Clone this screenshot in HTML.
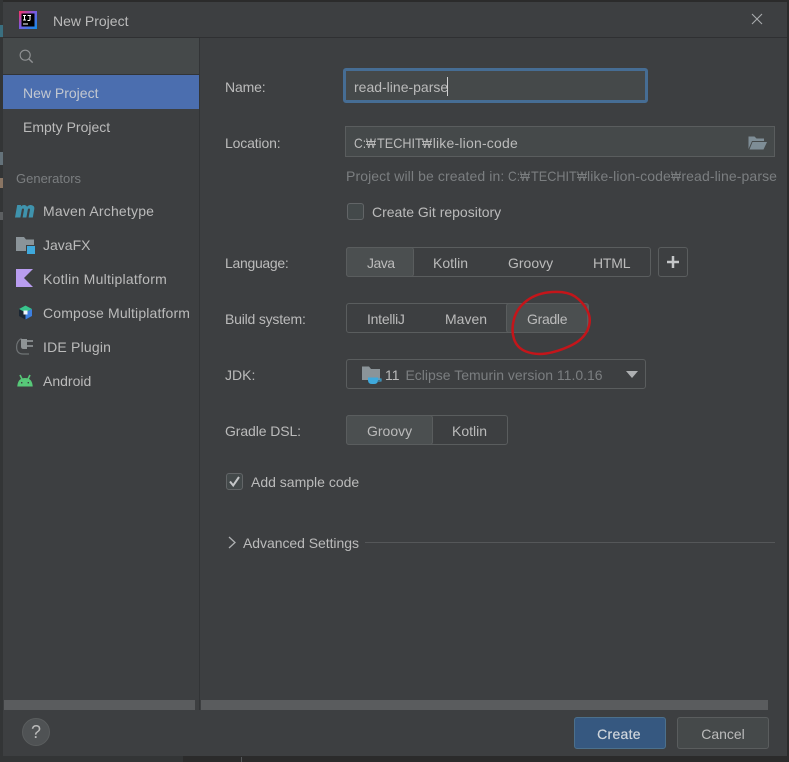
<!DOCTYPE html>
<html lang="en">
<head>
<meta charset="utf-8">
<title>New Project</title>
<style>
html,body{margin:0;padding:0;background:#2b2b2b;}
body{width:789px;height:762px;overflow:hidden;position:relative;font-family:"Liberation Sans","Noto Sans CJK KR",sans-serif;font-size:14px;color:#bbbbbb;}
.a{position:absolute;white-space:nowrap;}
.t{position:absolute;white-space:nowrap;line-height:18px;height:18px;}
.s{letter-spacing:.2px;}
.l{letter-spacing:-.15px;}
.box{position:absolute;box-sizing:border-box;}
.seg{position:absolute;box-sizing:border-box;border:1px solid #5a5d5e;border-radius:3px;height:30px;}
.sel{position:absolute;box-sizing:border-box;border:1px solid #5a5d5e;border-radius:3px;background:#4b4f50;height:30px;}
.dim{color:#7b7e80;}
.w{display:inline-block;width:10.5px;transform:scaleX(.75);transform-origin:0 50%;letter-spacing:0;}
.c{display:inline-block;width:12px;transform:scaleX(.86);transform-origin:0 50%;letter-spacing:0;}
.u{display:inline-block;width:45.7px;transform:scaleX(.905);transform-origin:0 50%;letter-spacing:0;}
svg{position:absolute;overflow:visible;}
</style>
</head>
<body>
<div class="box" style="left:0;top:0;width:3px;height:762px;background:#333536"></div>
<div class="box" style="left:0;top:25px;width:3px;height:12px;background:#3a6f80"></div>
<div class="box" style="left:0;top:152px;width:3px;height:13px;background:#64727a"></div>
<div class="box" style="left:0;top:178px;width:3px;height:10px;background:#8a7563"></div>
<div class="box" style="left:0;top:212px;width:3px;height:8px;background:#5c5f61"></div>
<div class="box" style="left:3px;top:2px;width:784px;height:754px;background:#3d3f41"></div>
<div class="box" style="left:3px;top:37px;width:784px;height:1px;background:#2f3032"></div>
<div class="box" style="left:199px;top:38px;width:1px;height:672px;background:#323436"></div>
<div class="box" style="left:3px;top:38px;width:196px;height:36px;background:#45494a"></div>
<div class="box" style="left:3px;top:74px;width:196px;height:1px;background:#323436"></div>
<div class="box" style="left:3px;top:75px;width:196px;height:34px;background:#4b6eaf"></div>

<svg style="left:18px;top:10px" width="20" height="20" viewBox="0 0 20 20">
<defs><linearGradient id="g" x1="0" y1="0" x2="1" y2="1"><stop offset="0" stop-color="#fe315d"/><stop offset=".45" stop-color="#7c59e0"/><stop offset="1" stop-color="#0b8fe8"/></linearGradient></defs>
<rect x="1" y="1" width="18" height="18" fill="url(#g)"/>
<rect x="3.5" y="3.5" width="13" height="13" fill="#000"/>
<path d="M5 5.5h3M6.5 5.5v4.5M5 10h3M9.5 5.5h3.5M12 5.5v4q0 1-1 1h-1.5" stroke="#fff" fill="none" stroke-width="1"/>
<rect x="5" y="13.5" width="5" height="1" fill="#fff"/>
</svg>
<div class="t" style="left:53px;top:12px">New Project</div>
<svg style="left:752px;top:14px" width="10" height="10" viewBox="0 0 10 10"><path d="M0 0L10 10M10 0L0 10" stroke="#a9abad" stroke-width="1.1"/></svg>

<svg style="left:19px;top:49px" width="15" height="15" viewBox="0 0 17 17"><circle cx="7" cy="7" r="5.7" fill="none" stroke="#8f9193" stroke-width="1.3"/><path d="M11 11L15.5 15.5" stroke="#8f9193" stroke-width="1.6"/></svg>

<div class="t" style="left:23px;top:84px;color:#c3c8d0">New Project</div>
<div class="t" style="left:23px;top:118px">Empty Project</div>
<div class="t dim" style="left:16px;top:170px;font-size:13px">Generators</div>

<svg style="left:15px;top:204px" width="20" height="14" viewBox="0 0 20 14"><path d="M0 13.5L2.2 1H6L5.8 2.5Q7.5 0.7 9.5 1Q11.5 1.3 12 2.8Q13.8 0.7 16 1Q19.8 1.5 19.3 5L17.8 13.5H13.6L15 5.6Q15 4.5 14 4.5Q13 4.5 12.8 5.6L11.4 13.5H7.6L9 5.6Q9 4.5 8 4.5Q7 4.5 6.8 5.6L5.4 13.5Z" fill="#3f93ad"/></svg>
<div class="t s" style="left:43px;top:202px">Maven Archetype</div>

<svg style="left:16px;top:236px" width="20" height="19" viewBox="0 0 20 19"><path d="M0 1H8L10 3.5H18V15H0Z" fill="#8b9499"/><rect x="11" y="10" width="8" height="8" fill="#3fa9dc"/><rect x="10" y="9" width="1" height="9" fill="#3d3f41"/><rect x="10" y="9" width="9" height="1" fill="#3d3f41"/></svg>
<div class="t" style="left:43px;top:236px">JavaFX</div>

<svg style="left:16px;top:269px" width="17" height="18" viewBox="0 0 17 18"><path d="M0 0H17L8 9L17 18H0Z" fill="#b99df0"/></svg>
<div class="t" style="left:43px;top:270px;letter-spacing:.25px">Kotlin Multiplatform</div>

<svg style="left:18px;top:305px" width="15" height="15" viewBox="0 0 15 15"><path d="M7.5 0.5L14 4V11L7.5 14.5L1 11V4Z" fill="#1c2733"/><path d="M7.5 0.5L14 4L7.5 7.5L1 4Z" fill="#39c48c"/><path d="M14 4V11L7.5 14.5V7.5Z" fill="#3c7fe0"/><rect x="5.5" y="5.5" width="4" height="4" fill="#f0f6fa"/></svg>
<div class="t s" style="left:43px;top:304px;letter-spacing:.15px">Compose Multiplatform</div>

<svg style="left:16px;top:337px" width="18" height="18" viewBox="0 0 18 18"><path d="M5.5 1.5Q0.6 4 0.6 10Q0.6 17 7 17H13" fill="none" stroke="#6f7375" stroke-width="1.2"/><path d="M5 2H11V12H7.5Q5 12 5 9.5Z" fill="#8f9496"/><path d="M11 4H17M11 9H17" stroke="#9a9ea0" stroke-width="1.6"/></svg>
<div class="t s" style="left:43px;top:338px">IDE Plugin</div>

<svg style="left:17px;top:375px" width="16" height="12" viewBox="0 0 16 12"><path d="M0.3 11.5Q0.8 3 8 3Q15.2 3 15.7 11.5Z" fill="#57c878"/><path d="M3 0L5 4M13 0L11 4" stroke="#57c878" stroke-width="1.6"/><rect x="4" y="7" width="1.4" height="1.4" fill="#3d3f41"/><rect x="10.6" y="7" width="1.4" height="1.4" fill="#3d3f41"/></svg>
<div class="t" style="left:43px;top:372px">Android</div>

<div class="t l" style="left:225px;top:78px">Name:</div>
<div class="box" style="left:343px;top:68px;width:305px;height:35px;background:#45494a;border:3px solid #466d94;border-radius:3px"></div>
<div class="t" style="left:354px;top:78px">read-line-parse</div>
<div class="box" style="left:447px;top:77px;width:1px;height:19px;background:#d0d0d0"></div>

<div class="t l" style="left:225px;top:134px">Location:</div>
<div class="box" style="left:345px;top:126px;width:430px;height:31px;background:#45494a;border:1px solid #5a5d5e"></div>
<div class="t" style="left:354px;top:134px"><span class="c">C:</span><span class="w">₩</span><span class="u">TECHIT</span><span class="w">₩</span><span style="letter-spacing:.2px">like-lion-code</span></div>
<svg style="left:748px;top:135px" width="19" height="15" viewBox="0 0 19 15"><path d="M0.5 14V1.5H6.5L8.5 3.5H16V6H4L0.5 14Z" fill="#7e8d96"/><path d="M4.5 7H19L15.5 14.5H1.5Z" fill="#7e8d96"/></svg>
<div class="t dim" style="left:346px;top:167px;letter-spacing:.1px">Project will be created in: <span class="c">C:</span><span class="w">₩</span><span class="u">TECHIT</span><span class="w">₩</span>like-lion-code<span class="w">₩</span>read-line-parse</div>

<div class="box" style="left:347px;top:203px;width:17px;height:17px;background:#43494a;border:1px solid #626567;border-radius:3px"></div>
<div class="t" style="left:372px;top:203px">Create Git repository</div>

<div class="t l" style="left:225px;top:254px;letter-spacing:-.3px">Language:</div>
<div class="seg" style="left:346px;top:247px;width:305px"></div>
<div class="sel" style="left:346px;top:247px;width:68px"></div>
<div class="t" style="left:367px;top:254px;letter-spacing:-.5px">Java</div>
<div class="t" style="left:433px;top:254px">Kotlin</div>
<div class="t" style="left:508px;top:254px">Groovy</div>
<div class="t" style="left:593px;top:254px;letter-spacing:-.2px">HTML</div>
<div class="box" style="left:658px;top:247px;width:30px;height:30px;border:1px solid #5a5d5e;border-radius:3px"></div>
<svg style="left:666px;top:255px" width="14" height="14" viewBox="0 0 14 14"><path d="M7 1V13M1 7H13" stroke="#c4c6c8" stroke-width="2.5"/></svg>

<div class="t l" style="left:225px;top:310px;letter-spacing:-.2px">Build system:</div>
<div class="seg" style="left:346px;top:303px;width:243px"></div>
<div class="sel" style="left:506px;top:303px;width:82px"></div>
<div class="t" style="left:367px;top:310px;letter-spacing:-.25px">IntelliJ</div>
<div class="t" style="left:445px;top:310px">Maven</div>
<div class="t" style="left:527px;top:310px;letter-spacing:-.3px">Gradle</div>
<svg style="left:0;top:0" width="789" height="762" viewBox="0 0 789 762"><path d="M546 353.5Q557 352 570 346Q583 340 587.5 330Q592 320 587.5 311Q583 302 575 296.5Q567 291 552 292Q537 293 527 300.5Q517 308 514 319Q511 330 514 339Q517 348 526 351.5Q535 355 546 353.5" fill="none" stroke="#c4151a" stroke-width="2.5"/></svg>

<div class="t" style="left:225px;top:366px">JDK:</div>
<div class="box" style="left:346px;top:359px;width:300px;height:30px;border:1px solid #5a5d5e;border-radius:3px"></div>
<svg style="left:362px;top:366px" width="20" height="19" viewBox="0 0 20 19"><path d="M0 0.5H7L9 3H18V14H0Z" fill="#8b9499"/><path d="M6 11.5H16V14Q16 18 12 18H10Q6 18 6 14Z" fill="#3fa9dc"/><path d="M16 13H19V15H16" fill="none" stroke="#3fa9dc" stroke-width="1"/></svg>
<div class="t" style="left:385px;top:366px">11 <span class="dim" style="margin-left:2px">Eclipse Temurin version 11.0.16</span></div>
<svg style="left:626px;top:371px" width="12" height="7" viewBox="0 0 12 7"><path d="M0 0H12L6 7Z" fill="#aeb0b2"/></svg>

<div class="t l" style="left:225px;top:422px;letter-spacing:-.1px">Gradle DSL:</div>
<div class="seg" style="left:346px;top:415px;width:162px"></div>
<div class="sel" style="left:346px;top:415px;width:87px"></div>
<div class="t" style="left:367px;top:422px">Groovy</div>
<div class="t" style="left:452px;top:422px">Kotlin</div>

<div class="box" style="left:226px;top:473px;width:17px;height:17px;background:#43494a;border:1px solid #626567;border-radius:3px"></div>
<svg style="left:228px;top:475px" width="13" height="13" viewBox="0 0 13 13"><path d="M2 6.5L5.2 10.5L11 2" fill="none" stroke="#c4c6c8" stroke-width="2"/></svg>
<div class="t" style="left:251px;top:473px">Add sample code</div>

<svg style="left:228px;top:536px" width="8" height="13" viewBox="0 0 8 13"><path d="M1 1L7 6.5L1 12" fill="none" stroke="#aeb0b2" stroke-width="1.3"/></svg>
<div class="t" style="left:243px;top:534px;letter-spacing:-.05px">Advanced Settings</div>
<div class="box" style="left:365px;top:542px;width:410px;height:1px;background:#555759"></div>

<div class="box" style="left:4px;top:700px;width:191px;height:10px;background:#5a5c5e"></div>
<div class="box" style="left:201px;top:700px;width:567px;height:10px;background:#5a5c5e"></div>

<div class="box" style="left:22px;top:718px;width:28px;height:28px;border-radius:50%;background:#4f5254;border:1px solid #5a5d5e"></div>
<div class="a" style="left:22px;top:718px;width:28px;line-height:28px;text-align:center;font-size:18px;color:#bbbbbb">?</div>

<div class="box" style="left:574px;top:717px;width:92px;height:32px;background:#365880;border:1px solid #4c708c;border-radius:3px"></div>
<div class="a" style="left:574px;top:725px;width:90px;line-height:18px;text-align:center;color:#d0d6dc;letter-spacing:.3px;-webkit-text-stroke:.2px #d0d6dc">Create</div>
<div class="box" style="left:677px;top:717px;width:92px;height:32px;background:#45494a;border:1px solid #5a5d5e;border-radius:3px"></div>
<div class="a" style="left:677px;top:725px;width:92px;line-height:18px;text-align:center">Cancel</div>

<div class="box" style="left:3px;top:756px;width:180px;height:6px;background:#333536"></div>
<div class="box" style="left:241px;top:757px;width:1px;height:5px;background:#55585a"></div>
</body>
</html>
